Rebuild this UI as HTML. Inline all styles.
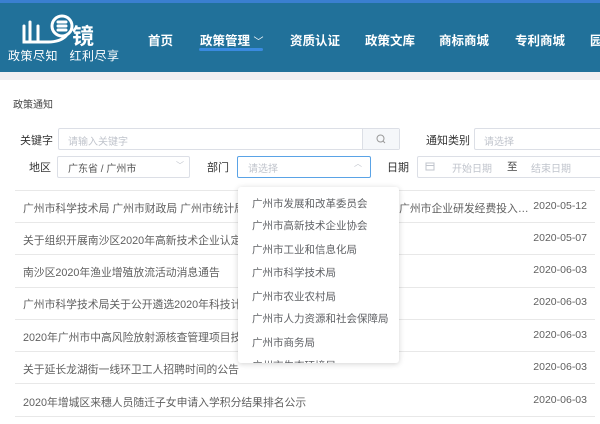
<!DOCTYPE html>
<html><head><meta charset="utf-8"><style>
*{margin:0;padding:0;box-sizing:border-box}
body{width:600px;height:424px;overflow:hidden;background:#fff;font-family:"Liberation Sans","Noto Sans CJK SC",sans-serif;position:relative;color:#555}
.abs{position:absolute;white-space:nowrap}
.hd{position:absolute;left:0;top:0;width:600px;height:72px;background:#21719a;border-top:3px solid #3a7fd0}
.nav{position:absolute;top:27px;color:#fff;font-weight:bold;font-size:12.5px}
.gray{position:absolute;left:0;top:72px;width:600px;height:8px;background:#efeff2}
.lbl{position:absolute;font-size:11px;color:#333}
.box{position:absolute;border:1px solid #dcdfe6;border-radius:2px;height:22px;background:#fff}
.ph{position:absolute;font-size:10px;color:#c0c4cc}
.row{position:absolute;left:15px;width:580px;border-top:1px solid #e8e8e8}
.rt{position:absolute;left:23px;font-size:10.8px;color:#606060;white-space:nowrap}
.dt{position:absolute;right:13px;font-size:10.5px;color:#606060}
.dd{position:absolute;left:238px;top:187px;width:161px;height:176px;background:#fff;box-shadow:0 1px 6px rgba(0,0,0,.18);border-radius:3px;overflow:hidden}
.dd div{position:absolute;left:14px;font-size:10.5px;color:#606266;white-space:nowrap}
</style></head><body>
<div class="hd">
  <svg class="abs" style="left:20px;top:9px" width="82" height="38" viewBox="0 0 82 38">
    <g fill="none" stroke="#fff" stroke-width="3" stroke-linecap="round">
      <path d="M4 14 V30 H16 M10 10 V30 M18 14 V30 H28"/>
      <circle cx="42" cy="14" r="10"/>
      <path d="M28 30 Q40 30 46 24"/>
      <path d="M38 10 H46 M38 14 H46 M38 18 H46"/>
    </g>
    <text x="52" y="32" font-size="22" font-weight="bold" fill="#fff" font-family="Noto Sans CJK SC">镜</text>
  </svg>
  <div class="abs" style="left:8px;top:44px;color:#fff;font-size:12px;letter-spacing:0.5px">政策尽知&nbsp;&nbsp;&nbsp;红利尽享</div>
  <div class="nav" style="left:148px">首页</div>
  <div class="nav" style="left:200px">政策管理 <span style="font-weight:normal;font-size:10px">﹀</span></div>
  <div class="abs" style="left:199px;top:45px;width:64px;height:3px;background:#3a8ae0;border-radius:2px"></div>
  <div class="nav" style="left:290px">资质认证</div>
  <div class="nav" style="left:365px">政策文库</div>
  <div class="nav" style="left:439px">商标商城</div>
  <div class="nav" style="left:515px">专利商城</div>
  <div class="nav" style="left:590px">园</div>
</div>
<div class="gray"></div>
<div class="abs" style="left:13px;top:96px;font-size:10px;color:#444">政策通知</div>

<div class="lbl" style="left:20px;top:132px">关键字</div>
<div class="box" style="left:58px;top:128px;width:342px"></div>
<div class="ph" style="left:68px;top:133px">请输入关键字</div>
<div class="abs" style="left:362px;top:129px;width:37px;height:20px;background:#f5f7fa;border-left:1px solid #dcdfe6"></div>
<svg class="abs" style="left:376px;top:134px" width="10" height="10"><circle cx="4.5" cy="4.5" r="3.5" fill="none" stroke="#999" stroke-width="1"/><path d="M7 7 L9 9" stroke="#999"/></svg>
<div class="lbl" style="left:426px;top:132px">通知类别</div>
<div class="box" style="left:474px;top:128px;width:140px"></div>
<div class="ph" style="left:484px;top:133px">请选择</div>

<div class="lbl" style="left:29px;top:159px">地区</div>
<div class="box" style="left:57px;top:156px;width:133px"></div>
<div class="abs" style="left:68px;top:160px;font-size:10px;color:#555">广东省 / 广州市</div>
<div class="ph" style="left:176px;top:160px;font-size:8px">﹀</div>
<div class="lbl" style="left:207px;top:159px">部门</div>
<div class="box" style="left:237px;top:156px;width:134px;border-color:#5aa3e6"></div>
<div class="ph" style="left:248px;top:160px">请选择</div>
<div class="ph" style="left:354px;top:158px;font-size:8px">︿</div>
<div class="lbl" style="left:387px;top:159px">日期</div>
<div class="box" style="left:417px;top:156px;width:200px"></div>
<svg class="abs" style="left:425px;top:161px" width="10" height="10"><rect x="1" y="2" width="8" height="7" fill="none" stroke="#c0c4cc"/><path d="M1 4.5H9" stroke="#c0c4cc"/></svg>
<div class="ph" style="left:452px;top:160px">开始日期</div>
<div class="abs" style="left:507px;top:159px;font-size:10.5px;color:#444">至</div>
<div class="ph" style="left:531px;top:160px">结束日期</div>

<div class="row" style="top:190px"></div>
<div class="row" style="top:222px"></div>
<div class="row" style="top:254px"></div>
<div class="row" style="top:287px"></div>
<div class="row" style="top:319px"></div>
<div class="row" style="top:351px"></div>
<div class="row" style="top:383px"></div>
<div class="row" style="top:416px"></div>

<div class="rt" style="top:200px;width:512px;overflow:hidden;text-overflow:ellipsis">广州市科学技术局 广州市财政局 广州市统计局 国家税务总局广州市税务局关于广州市企业研发经费投入后补助实施方案的通知</div>
<div class="dt" style="top:200px">2020-05-12</div>
<div class="rt" style="top:232px">关于组织开展南沙区2020年高新技术企业认定工作的通知</div>
<div class="dt" style="top:232px">2020-05-07</div>
<div class="rt" style="top:264px">南沙区2020年渔业增殖放流活动消息通告</div>
<div class="dt" style="top:264px">2020-06-03</div>
<div class="rt" style="top:296px">广州市科学技术局关于公开遴选2020年科技计划项目评审专家的通知</div>
<div class="dt" style="top:296px">2020-06-03</div>
<div class="rt" style="top:329px">2020年广州市中高风险放射源核查管理项目技术服务采购公告</div>
<div class="dt" style="top:329px">2020-06-03</div>
<div class="rt" style="top:361px">关于延长龙湖街一线环卫工人招聘时间的公告</div>
<div class="dt" style="top:361px">2020-06-03</div>
<div class="rt" style="top:394px">2020年增城区来穗人员随迁子女申请入学积分结果排名公示</div>
<div class="dt" style="top:394px">2020-06-03</div>

<div class="dd">
  <div style="top:9px">广州市发展和改革委员会</div>
  <div style="top:31px">广州市高新技术企业协会</div>
  <div style="top:55px">广州市工业和信息化局</div>
  <div style="top:78px">广州市科学技术局</div>
  <div style="top:102px">广州市农业农村局</div>
  <div style="top:124px">广州市人力资源和社会保障局</div>
  <div style="top:148px">广州市商务局</div>
  <div style="top:171px">广州市生态环境局</div>
</div>
</body></html>
